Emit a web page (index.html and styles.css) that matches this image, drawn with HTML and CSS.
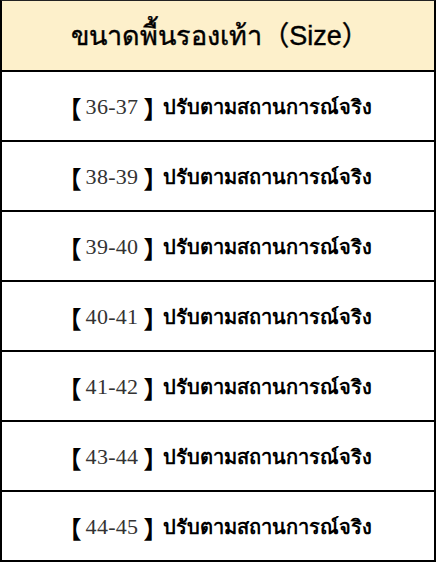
FILE: index.html
```html
<!DOCTYPE html>
<html lang="th">
<head>
<meta charset="utf-8">
<link rel="stylesheet" href="styles.css">
</head>
<body>
<div class="table">
  <div class="row head"><span class="title">ขนาดพื้นรองเท้า<span class="paren">（</span>Size<span class="paren">）</span></span></div>
  <div class="row"><span class="br open">【</span><span class="num">36-37</span><span class="br close">】</span><span class="th">ปรับตามสถานการณ์จริง</span></div>
  <div class="row"><span class="br open">【</span><span class="num">38-39</span><span class="br close">】</span><span class="th">ปรับตามสถานการณ์จริง</span></div>
  <div class="row"><span class="br open">【</span><span class="num">39-40</span><span class="br close">】</span><span class="th">ปรับตามสถานการณ์จริง</span></div>
  <div class="row"><span class="br open">【</span><span class="num">40-41</span><span class="br close">】</span><span class="th">ปรับตามสถานการณ์จริง</span></div>
  <div class="row"><span class="br open">【</span><span class="num">41-42</span><span class="br close">】</span><span class="th">ปรับตามสถานการณ์จริง</span></div>
  <div class="row"><span class="br open">【</span><span class="num">43-44</span><span class="br close">】</span><span class="th">ปรับตามสถานการณ์จริง</span></div>
  <div class="row"><span class="br open">【</span><span class="num">44-45</span><span class="br close">】</span><span class="th">ปรับตามสถานการณ์จริง</span></div>
</div>
</body>
</html>
```
FILE: styles.css
```css
html, body {
  margin: 0;
  padding: 0;
  background: #ffffff;
}
.table {
  width: 436px;
  height: 562px;
  box-sizing: border-box;
  border-top: 1px solid #222;
  border-left: 2px solid #000;
  border-right: 2px solid #000;
  border-bottom: 2px solid #000;
  display: grid;
  grid-template-rows: 69px repeat(7, 1fr);
}
.row {
  display: flex;
  align-items: center;
  justify-content: center;
  border-top: 2px solid #000;
  color: #000;
  font-family: "Liberation Sans", "DejaVu Sans", sans-serif;
  padding-top: 2px;
  padding-right: 6px;
}
.head {
  border-top: none;
  background: #fdf0cb;
  padding-top: 0;
  padding-right: 0;
  padding-left: 4px;
}
.title {
  font-size: 27px;
  font-weight: normal;
  -webkit-text-stroke: 0.4px #000;
}
.paren {
  font-family: "Noto Sans CJK SC", sans-serif;
  font-weight: normal;
}
.br {
  font-family: "Noto Sans CJK SC", sans-serif;
  font-size: 24px;
  font-weight: bold;
}
.open {
  margin-right: 4px;
}
.close {
  margin-left: 5px;
  letter-spacing: -5px;
}
.num {
  font-family: "Liberation Serif", serif;
  font-size: 22px;
  letter-spacing: 0.3px;
  color: #333;
}
.th {
  font-size: 20px;
  font-weight: bold;
  margin-left: 1px;
}
```
